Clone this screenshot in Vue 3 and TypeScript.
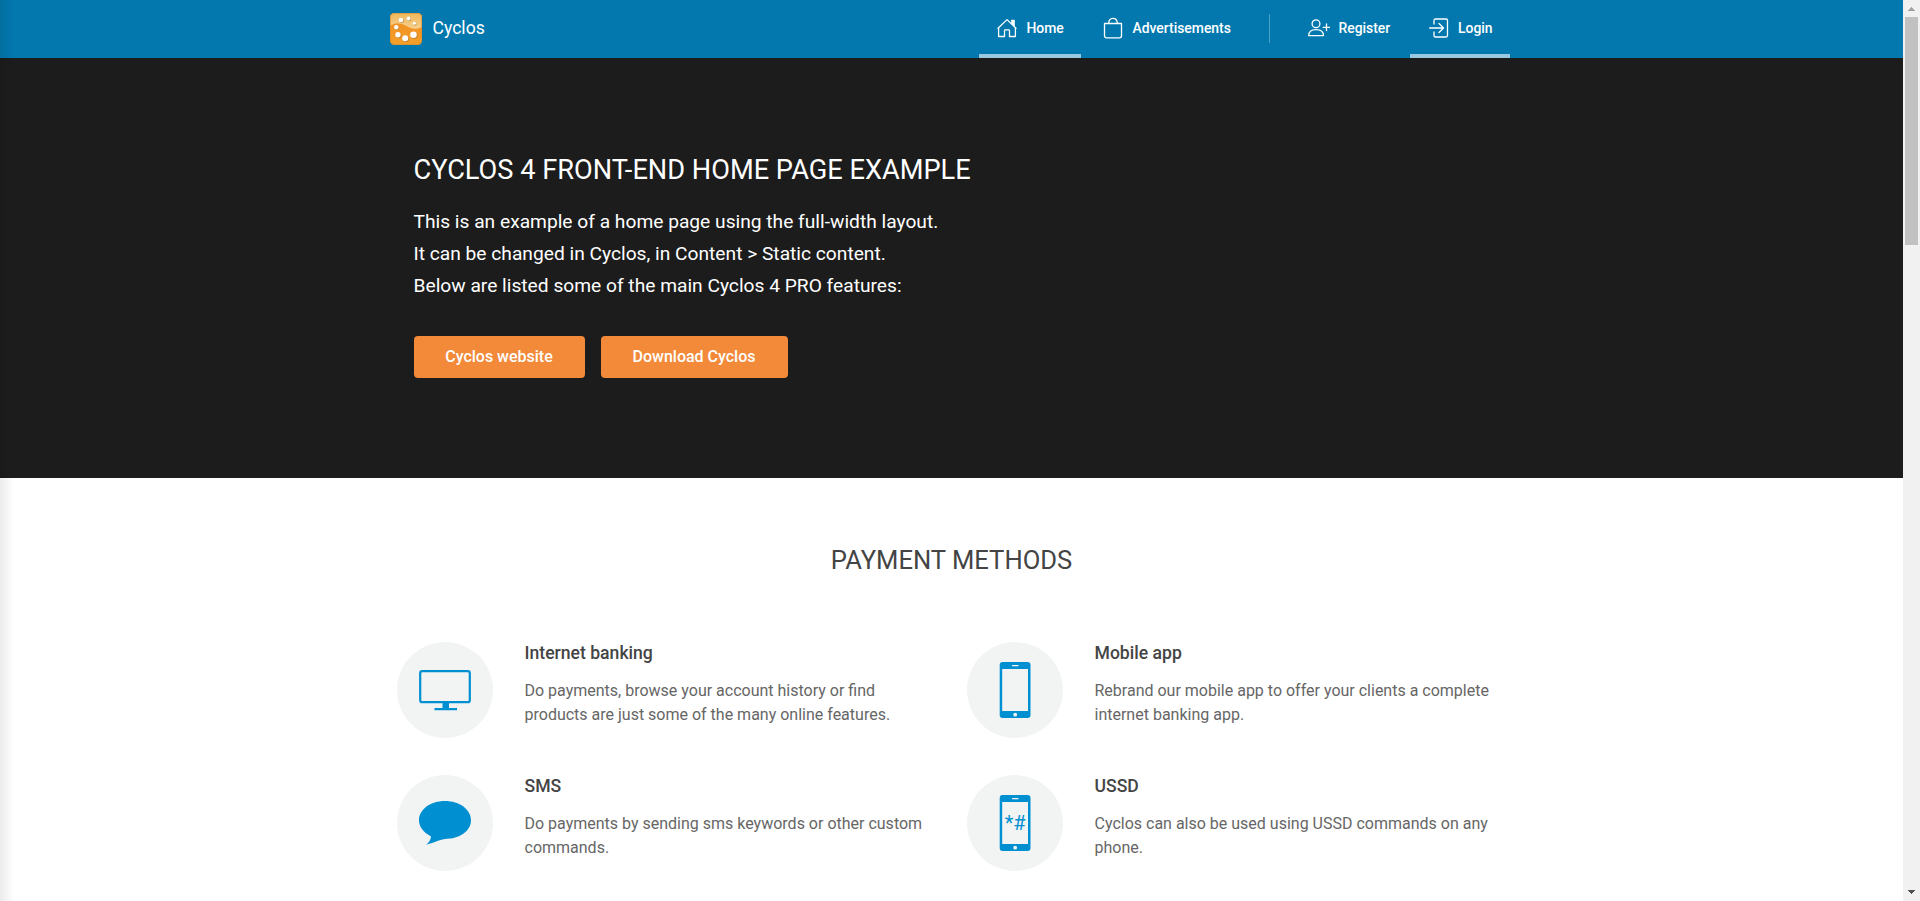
<script setup lang="ts">
type FeatureIcon = 'monitor' | 'phone' | 'bubble' | 'ussd'
interface Feature {
  icon: FeatureIcon
  title: string
  lines: string[]
}

const features: Feature[] = [
  {
    icon: 'monitor',
    title: 'Internet banking',
    lines: ['Do payments, browse your account history or find', 'products are just some of the many online features.'],
  },
  {
    icon: 'phone',
    title: 'Mobile app',
    lines: ['Rebrand our mobile app to offer your clients a complete', 'internet banking app.'],
  },
  {
    icon: 'bubble',
    title: 'SMS',
    lines: ['Do payments by sending sms keywords or other custom', 'commands.'],
  },
  {
    icon: 'ussd',
    title: 'USSD',
    lines: ['Cyclos can also be used using USSD commands on any', 'phone.'],
  },
]
</script>

<template>
  <div class="window">
    <div class="page">
      <header class="topbar">
        <div class="topbar-inner">
          <a class="brand">
            <svg class="logo" width="34" height="34" viewBox="0 0 34 34">
              <defs>
                <linearGradient id="logo-top" x1="0" y1="0" x2="0" y2="1">
                  <stop offset="0" stop-color="#f0b75a" />
                  <stop offset="1" stop-color="#f5d08e" />
                </linearGradient>
                <linearGradient id="logo-base" x1="0" y1="0" x2="0" y2="1">
                  <stop offset="0" stop-color="#f28a1c" />
                  <stop offset="1" stop-color="#f3a02c" />
                </linearGradient>
              </defs>
              <rect x="1" y="1" width="32" height="32" rx="4.5" fill="url(#logo-base)" />
              <path d="M1 13.500V5.500A4.500 4.500 0 0 1 5.500 1h23A4.500 4.500 0 0 1 33 5.500V15C26 18.500 21 16 16.500 13.500S7 10.500 1 13.500z" fill="url(#logo-top)" />
              <rect x="1.500" y="1.500" width="31" height="31" rx="4" fill="none" stroke="#d98a2b" stroke-opacity=".6" />
              <g fill="#8f5a1c" fill-opacity=".5">
                <circle cx="12.700" cy="8.700" r="2.300" /><circle cx="20.100" cy="7.200" r="2" />
                <circle cx="26" cy="11.900" r="1.500" /><circle cx="8" cy="15.900" r="2.200" />
                <circle cx="9.700" cy="23.500" r="2.700" /><circle cx="16.900" cy="26.900" r="3" />
                <circle cx="25.200" cy="23.500" r="3.300" />
              </g>
              <g fill="#fff">
                <circle cx="12" cy="8" r="2.300" /><circle cx="19.500" cy="6.500" r="2" />
                <circle cx="25.400" cy="11.300" r="1.500" /><circle cx="7.300" cy="15.300" r="2.200" />
                <circle cx="9" cy="22.800" r="2.700" /><circle cx="16.200" cy="26.200" r="3" />
                <circle cx="24.500" cy="22.800" r="3.300" />
              </g>
            </svg>
            <span>Cyclos</span>
          </a>
          <nav class="nav">
            <a class="nav-item home active">
              <svg width="20" height="20" viewBox="0 0 20 20">
                <path d="M1.600 9.700V18.500H7.500V12.500q0-.7.700-.7h3.600q.7 0 .7.700v6h5.900V9.700M1 10.200 10 1.600l9 8.600M14.500 2.500h2.500V8" />
                <path class="solid" d="M14.200 2h3.300v6.200l-3.300-3z" />
              </svg>
              <span>Home</span>
            </a>
            <a class="nav-item ads">
              <svg width="20" height="22" viewBox="0 0 20 22">
                <path d="M1.500 6.500h17v12.300a2 2 0 0 1-2 2h-13a2 2 0 0 1-2-2zM5.700 6.500C5.700 3 7.300 1.300 10 1.300s4.300 1.700 4.300 5.200" />
              </svg>
              <span>Advertisements</span>
            </a>
            <i class="divider"></i>
            <a class="nav-item register">
              <svg width="22" height="18" viewBox="0 0 22 18">
                <circle cx="8" cy="4.700" r="3.900" />
                <path d="M.7 16.700c0-4 2.600-6.100 7.300-6.100s7.500 2.100 7.500 6.100zM18.500 5v6.500M15.200 8.300h6.600" />
              </svg>
              <span>Register</span>
            </a>
            <a class="nav-item login active">
              <svg width="20" height="20" viewBox="0 0 20 20">
                <path d="M5 6V2.500q0-1.500 1.500-1.500h10.500q1.500 0 1.500 1.500v15q0 1.500-1.500 1.500H6.500Q5 19 5 17.500V14M.7 10h13.500M10 5.500l4.500 4.500-4.500 4.500" />
              </svg>
              <span>Login</span>
            </a>
          </nav>
        </div>
      </header>

      <section class="hero">
        <div class="hero-inner">
          <h1>CYCLOS 4 FRONT-END HOME PAGE EXAMPLE</h1>
          <p>
            This is an example of a home page using the full-width layout.<br />
            It can be changed in Cyclos, in Content &gt; Static content.<br />
            Below are listed some of the main Cyclos 4 PRO features:
          </p>
          <div class="actions">
            <a class="button website">Cyclos website</a>
            <a class="button download">Download Cyclos</a>
          </div>
        </div>
      </section>

      <main class="content">
        <h2>PAYMENT METHODS</h2>
        <div class="features">
          <article v-for="f in features" :key="f.title" class="feature">
            <div class="disc">
              <svg width="96" height="96" viewBox="0 0 96 96">
                <g v-if="f.icon === 'monitor'">
                  <rect x="23.200" y="29.200" width="49.600" height="31" rx="2" fill="none" stroke="#008fd1" stroke-width="2.200" />
                  <path d="M45.500 61h6.500v5H60v2.200H37.500V66h8z" fill="#008fd1" />
                </g>
                <path
                  v-else-if="f.icon === 'bubble'"
                  d="M48 26c14.600 0 26 8.500 26 19.300S62.500 64 48 64c-3.500.4-10.500 3.300-18.800 5.800 2.500-2.400 4.500-4.700 4.800-8.400C26.500 57.500 22 52 22 45.300 22 34.500 33.400 26 48 26z"
                  fill="#008fd1"
                />
                <g v-else>
                  <rect x="32.700" y="20" width="30.800" height="56" rx="3" fill="#008fd1" />
                  <rect x="35.200" y="27" width="25.800" height="42" fill="#f2f4f4" />
                  <rect x="45" y="23" width="6.500" height="1.300" rx=".6" fill="#f2f4f4" />
                  <circle cx="48.200" cy="72.700" r="1.900" fill="#f2f4f4" />
                  <text v-if="f.icon === 'ussd'" class="code" x="48.200" y="55" text-anchor="middle">*#</text>
                </g>
              </svg>
            </div>
            <div class="text">
              <h3>{{ f.title }}</h3>
              <p><span v-for="line in f.lines" :key="line">{{ line }}</span></p>
            </div>
          </article>
        </div>
      </main>
      <div class="edge-shadow"></div>
    </div>

    <div class="scrollbar">
      <svg width="17" height="17" viewBox="0 0 17 17"><path d="M8 7h1v1h1v1h1v1h1v1H5v-1h1V9h1V8h1z" fill="#a3a3a3" /></svg>
      <div class="thumb"></div>
      <svg class="down" width="17" height="17" viewBox="0 0 17 17"><path d="M5 6h7v1h-1v1h-1v1H9v1H8V9H7V8H6V7H5z" fill="#505050" /></svg>
    </div>
  </div>
</template>

<style>
body {
  overflow: hidden;
}
</style>

<style scoped>
.window {
  display: flex;
  width: 1920px;
  height: 901px;
  overflow: hidden;
  background: #fff;
  font-family: Roboto, "Liberation Sans", sans-serif;
}
.page {
  position: relative;
  width: 1903px;
  height: 901px;
  overflow: hidden;
}
.edge-shadow {
  position: absolute;
  top: 0;
  bottom: 0;
  left: 0;
  width: 14px;
  background: linear-gradient(90deg, rgba(0, 0, 0, 0.08), rgba(0, 0, 0, 0));
}
.topbar {
  height: 58px;
  background: #0278ae;
}
.topbar-inner {
  display: flex;
  justify-content: space-between;
  height: 58px;
  width: 1121px;
  margin-left: 389px;
}
.brand {
  display: flex;
  align-items: center;
  gap: 9.5px;
  color: #fff;
  font-size: 17.6px;
}
.brand span {
  padding-bottom: 2px;
}
.logo {
  display: block;
}
.nav {
  display: flex;
  align-items: stretch;
  color: #fff;
  font-size: 13.9px;
  font-weight: 500;
}
.nav-item {
  box-sizing: border-box;
  display: flex;
  align-items: center;
  gap: 9.5px;
  padding: 2px 0 0 18px;
  white-space: nowrap;
  border-bottom: 4px solid transparent;
}
.nav-item.active {
  border-bottom-color: #9ac9df;
}
.nav-item svg {
  flex: none;
  fill: none;
  stroke: #fff;
  stroke-width: 1.3;
  stroke-linecap: round;
  stroke-linejoin: round;
}
.nav-item svg .solid {
  fill: #fff;
  stroke: none;
}
.home {
  width: 102px;
  margin-right: 4px;
}
.ads {
  width: 184px;
}
.divider {
  width: 1px;
  height: 29px;
  margin-top: 14px;
  background: #4ba0c6;
}
.register {
  width: 120px;
  margin-left: 20px;
  gap: 8.5px;
}
.login {
  width: 100px;
  padding-left: 19px;
  gap: 9px;
}
.hero {
  height: 420px;
  background: #1c1c1c;
  color: #fff;
}
.hero-inner {
  padding: 94px 0 0 413.5px;
}
h1,
h2,
h3,
p {
  margin: 0;
}
h1 {
  font-size: 27.2px;
  line-height: 36px;
  font-weight: 400;
}
.hero p {
  margin-top: 18px;
  font-size: 19.2px;
  line-height: 32px;
}
.actions {
  display: flex;
  gap: 16px;
  margin-top: 34px;
}
.button {
  height: 42px;
  border-radius: 4px;
  background: #f28a3a;
  font-size: 16px;
  font-weight: 500;
  line-height: 42px;
  text-align: center;
}
.website {
  width: 171px;
}
.download {
  width: 187px;
}
.content {
  padding-top: 64px;
}
h2 {
  color: #444;
  font-size: 25.6px;
  line-height: 36px;
  font-weight: 400;
  text-align: center;
}
.features {
  display: grid;
  grid-template-columns: 570px 570px;
  row-gap: 37px;
  padding: 64px 0 0 397px;
}
.feature {
  display: flex;
  gap: 31.5px;
  height: 96px;
}
.disc {
  flex: none;
  width: 96px;
  height: 96px;
  border-radius: 50%;
  background: #f2f4f4;
}
.disc svg {
  display: block;
}
.code {
  fill: #008fd1;
  font-size: 20px;
}
h3 {
  color: #444;
  font-size: 17.6px;
  line-height: 22px;
  font-weight: 500;
}
.text p {
  margin-top: 15px;
  color: #666;
  font-size: 16px;
  line-height: 24px;
  white-space: nowrap;
}
.text p span {
  display: block;
}
.scrollbar {
  display: flex;
  flex-direction: column;
  width: 17px;
  background: #f1f1f1;
}
.scrollbar svg {
  display: block;
  flex: none;
}
.thumb {
  width: 13px;
  height: 228px;
  margin-left: 2px;
  background: #c1c1c1;
}
.down {
  margin-top: auto;
}
</style>
